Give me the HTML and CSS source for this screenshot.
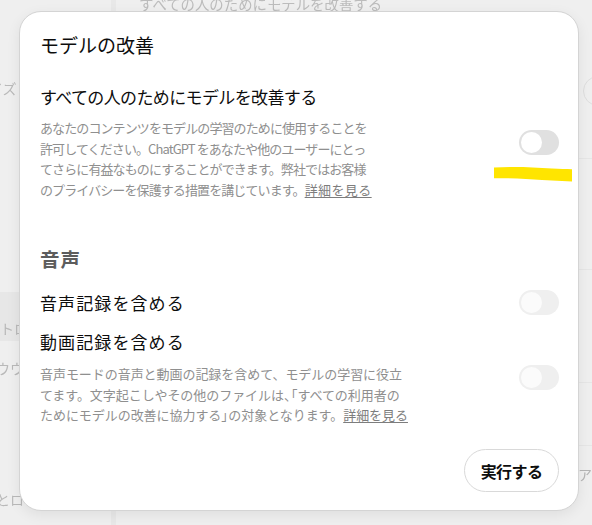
FILE: index.html
```html
<!DOCTYPE html>
<html lang="ja">
<head>
<meta charset="utf-8">
<title>モデルの改善</title>
<link rel="stylesheet" href="styles.css">
</head>
<body>
<div class="page">
  <aside class="sidebar">
    <div class="side-item side-a"><span class="side-label">イズ</span></div>
    <div class="side-item side-b active"><span class="side-label">コントロール</span></div>
    <div class="side-item side-c"><span class="side-label">ウウ</span></div>
    <div class="side-item side-d"><span class="side-label">とロ</span></div>
  </aside>
  <main class="main">
    <div class="bg-title">すべての人のためにモデルを改善する</div>
    <div class="bg-right">
      <div class="bg-circle"></div>
      <div class="bg-line l1"></div>
      <div class="bg-line l2"></div>
      <div class="bg-line l3"></div>
      <div class="bg-line l4"></div>
      <div class="bg-a">ア</div>
    </div>
  </main>
</div>

<div class="modal" role="dialog" aria-label="モデルの改善">
  <h2 class="modal-title">モデルの改善</h2>

  <div class="row row-main">
    <div class="row-text">
      <div class="row-heading h-wide">すべての人のためにモデルを改善する</div>
      <p class="desc desc-1">あなたのコンテンツをモデルの学習のために使用することを<br>許可してください。ChatGPT をあなたや他のユーザーにとっ<br>てさらに有益なものにすることができます。弊社ではお客様<br>のプライバシーを保護する措置を講じています。<a class="link" href="#">詳細を見る</a></p>
    </div>
    <div class="toggle"><span class="knob"></span></div>
  </div>

  <h3 class="section-label">音声</h3>

  <div class="row row-voice">
    <div class="row-text">
      <div class="row-heading h-spaced">音声記録を含める</div>
    </div>
    <div class="toggle toggle-off"><span class="knob"></span></div>
  </div>

  <div class="row row-video">
    <div class="row-text">
      <div class="row-heading h-spaced">動画記録を含める</div>
      <p class="desc desc-2">音声モードの音声と動画の記録を含めて、モデルの学習に役立<br>てます。文字起こしやその他のファイルは<span class="sq">、</span>「すべての利用者の<br>ためにモデルの改善に協力する<span class="sq">」</span>の対象となります。<a class="link" href="#">詳細を見る</a></p>
    </div>
    <div class="toggle toggle-off"><span class="knob"></span></div>
  </div>

  <div class="footer">
    <button class="btn">実行する</button>
  </div>
</div>

<svg class="marker" width="82" height="22" viewBox="0 0 82 22" aria-hidden="true">
  <path d="M2 3.5 C20 2.5 40 3 60 4.5 C68 5 74 5 80 5.2 L80 17.5 C70 17 60 16.5 50 16 C36 15.2 20 14 2 14.2 Z" fill="#ffe500"/>
</svg>
</body>
</html>
```

FILE: styles.css
```css
* { box-sizing: border-box; }

html, body {
  margin: 0;
  padding: 0;
}

body {
  width: 592px;
  height: 525px;
  overflow: hidden;
  background: #efefef;
  font-family: "Noto Sans CJK JP", "Noto Sans", "Liberation Sans", sans-serif;
  color: #0d0d0d;
  position: relative;
}

/* ---------- background page (dimmed) ---------- */
.page {
  display: flex;
  height: 525px;
}

.sidebar {
  width: 116px;
  flex: none;
  border-right: 5px solid #e8e8e8;
  display: flex;
  flex-direction: column;
}

.side-item {
  overflow: hidden;
  white-space: nowrap;
  color: #b9b9b9;
  font-size: 14px;
  line-height: 20px;
  filter: blur(0.7px);
}

.side-label { display: block; }

.side-a { margin-top: 78px; }
.side-a .side-label { margin-left: -11px; }

.side-b {
  margin-top: 194px;
  padding: 26px 0 3px;
  background: #e7e7e7;
}
.side-b .side-label { margin-left: -28px; }

.side-c { margin-top: 17px; }
.side-c .side-label { margin-left: -4px; }

.side-d { margin-top: 111px; }
.side-d .side-label { margin-left: -4px; }

.main {
  flex: 1;
  display: flex;
  flex-direction: column;
  position: relative;
}

.bg-title {
  margin: -6px 0 0 23px;
  font-size: 14.4px;
  line-height: 20px;
  color: #bcbcbc;
  filter: blur(0.7px);
  white-space: nowrap;
}

.bg-right {
  margin-left: auto;
  width: 16px;
  flex: 1;
  display: flex;
  flex-direction: column;
}

.bg-circle {
  width: 30px;
  height: 30px;
  border-radius: 50%;
  border: 1px solid #dedede;
  margin: 62px 0 0 7px;
  flex: none;
}

.bg-line {
  height: 1px;
  background: #e6e6e6;
  flex: none;
}
.l1 { margin-top: 52px; }
.l2 { margin-top: 110px; }
.l3 { margin-top: 112px; }
.l4 { margin-top: 62px; }

.bg-a {
  margin-top: 20px;
  font-size: 14px;
  line-height: 16px;
  color: #b5b5b5;
  filter: blur(0.6px);
  margin-left: 2px;
}

/* ---------- modal ---------- */
.modal {
  position: absolute;
  left: 19px;
  top: 11px;
  width: 560px;
  height: 500px;
  background: #ffffff;
  border: 1px solid #d4d4d4;
  border-radius: 22px;
  box-shadow: 0 4px 14px rgba(0, 0, 0, 0.07);
  padding: 21px 19px 18px 20px;
  display: flex;
  flex-direction: column;
}

.modal-title {
  margin: 0;
  font-size: 19px;
  font-weight: 400;
  line-height: 24px;
  color: #0d0d0d;
  letter-spacing: 0;
}

.row {
  display: flex;
  align-items: center;
  justify-content: space-between;
}

.row-text {
  display: flex;
  flex-direction: column;
}

.row-main { margin-top: 28px; }
.row-voice { margin-top: 18px; }
.row-video { margin-top: 15px; }

.row-heading {
  font-size: 17px;
  line-height: 24px;
  color: #0d0d0d;
  white-space: nowrap;
}

.h-wide { letter-spacing: -0.62px; }
.h-spaced { letter-spacing: 1.1px; }

.desc {
  margin: 9px 0 0;
  font-size: 13px;
  line-height: 20.5px;
  color: #8f8f8f;
  white-space: nowrap;
}

.desc-1 { letter-spacing: -0.9px; }
.desc-1 .link { letter-spacing: 0.4px; }
.desc-2 { margin-top: 10px; letter-spacing: -0.05px; }

.sq { letter-spacing: -6px; }

.link {
  color: #7d7d7d;
  text-decoration: underline;
  text-underline-offset: 2px;
}

.section-label {
  margin: 46px 0 0;
  font-size: 19.5px;
  line-height: 26px;
  font-weight: 700;
  color: #5d5d5d;
  letter-spacing: 1px;
}

.toggle {
  width: 40px;
  height: 25px;
  border-radius: 13px;
  background: #e0e0e0;
  padding: 2px;
  flex: none;
  display: flex;
  align-items: center;
}

.knob {
  width: 21px;
  height: 21px;
  border-radius: 50%;
  background: #ffffff;
  display: block;
}

.toggle-off { background: #efefef; }
.toggle-off .knob { background: #fbfbfb; }

.footer {
  margin-top: auto;
  display: flex;
  justify-content: flex-end;
}

.btn {
  width: 95px;
  height: 43px;
  border-radius: 22px;
  border: 1px solid #d9d9d9;
  background: #ffffff;
  font-family: inherit;
  font-size: 16px;
  font-weight: 700;
  color: #0d0d0d;
  letter-spacing: -0.6px;
  padding: 0;
}

/* annotation over the screenshot */
.marker {
  position: absolute;
  left: 492px;
  top: 164px;
}
```
